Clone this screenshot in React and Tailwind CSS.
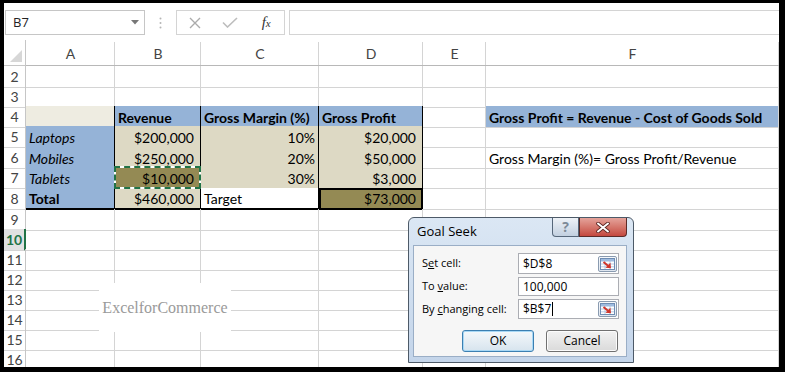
import React from "react";
import { twMerge } from "tailwind-merge";

const GRID = "grid grid-cols-[22px_89px_86px_118px_104px_63px_1fr]";
const COLS = ["A", "B", "C", "D", "E", "F"];

const blueCell = "bg-[#95b3d7] border-r-black border-b-black";
const tanCell = "bg-[#ddd9c4] border-r-black border-b-[#ddd9c4] justify-end";
const tanLast = "bg-[#ddd9c4] border-r-black border-b-black justify-end";
const headCell = "bg-[#95b3d7] border-r-black border-b-black font-bold";
const line3 = { cls: "border-b-black" };

const rows = [
  { n: 2, h: "h-[20px]" },
  { n: 3, h: "h-[20px]", cells: { A: line3, B: line3, C: line3, D: line3 } },
  {
    n: 4,
    h: "h-[20px]",
    cells: {
      A: { cls: "bg-[#eeece1] border-r-black border-b-black" },
      B: { cls: headCell, text: "Revenue" },
      C: { cls: headCell, text: "Gross Margin (%)" },
      D: { cls: headCell, text: "Gross Profit" },
      F: { cls: "bg-[#95b3d7] font-bold", text: "Gross Profit = Revenue - Cost of Goods Sold" },
    },
  },
  {
    n: 5,
    h: "h-[21px]",
    cells: {
      A: { cls: blueCell + " italic", text: "Laptops" },
      B: { cls: tanCell + " pr-[6px]", text: "$200,000" },
      C: { cls: tanCell, text: "10%" },
      D: { cls: tanCell + " pr-[6px]", text: "$20,000" },
    },
  },
  {
    n: 6,
    h: "h-[20px]",
    cells: {
      A: { cls: blueCell + " italic", text: "Mobiles" },
      B: { cls: tanLast + " pr-[6px]", text: "$250,000" },
      C: { cls: tanCell, text: "20%" },
      D: { cls: tanCell + " pr-[6px]", text: "$50,000" },
      F: { text: "Gross Margin (%)= Gross Profit/Revenue" },
    },
  },
  {
    n: 7,
    h: "h-[21px]",
    cells: {
      A: { cls: blueCell + " italic", text: "Tablets" },
      B: { cls: "bg-[#948a54] border-r-black border-b-black justify-end pr-[6px] overflow-visible", text: "$10,000", ants: true },
      C: { cls: tanLast, text: "30%" },
      D: { cls: tanCell + " pr-[6px]", text: "$3,000" },
    },
  },
  {
    n: 8,
    h: "h-[21px]",
    cells: {
      A: { cls: blueCell + " font-bold border-b-2", text: "Total" },
      B: { cls: "bg-[#ddd9c4] border-r-black border-b-2 border-b-black justify-end pr-[6px]", text: "$460,000" },
      C: { cls: "bg-white border-r-black border-b-2 border-b-black", text: "Target" },
      D: { cls: "bg-[#948a54] border-2 border-black justify-end pr-[5px]", text: "$73,000" },
    },
  },
  { n: 9, h: "h-[20px]" },
  { n: 10, h: "h-[20px]", active: true },
  { n: 11, h: "h-[20px]" },
  { n: 12, h: "h-[20px]" },
  { n: 13, h: "h-[20px]" },
  { n: 14, h: "h-[20px]" },
  { n: 15, h: "h-[20px]" },
  { n: 16, h: "h-[20px]" },
];

function Row({ n, h, cells = {}, active }) {
  return (
    <div className={`${GRID} ${h} shrink-0`}>
      <div
        className={twMerge(
          "flex items-center justify-center border-r border-b border-[#d4d4d4] border-r-[#c6c6c6] text-[14px] text-[#444]",
          active && "bg-[#e1e1e1] font-bold text-[#217346] border-r-2 border-r-[#217346]"
        )}
      >
        {n}
      </div>
      {COLS.map((c) => {
        const cell = cells[c] || {};
        return (
          <div
            key={c}
            className={twMerge(
              "relative flex items-end overflow-hidden whitespace-nowrap border-r border-b border-[#d4d4d4] px-[3px] pb-[1px] text-[14px] leading-[17px] text-black",
              cell.cls
            )}
          >
            {cell.text}
            {cell.ants && (
              <>
                <div className="absolute -top-px -left-px -right-px -bottom-px z-10 border-2 border-white" />
                <div className="absolute -top-px -left-px -right-px -bottom-px z-10 border-2 border-dashed border-[#217346]" />
              </>
            )}
          </div>
        );
      })}
    </div>
  );
}

function HeaderRow() {
  return (
    <div className={`${GRID} h-[26px] shrink-0`}>
      <div className="flex items-end justify-end pr-[3px] pb-[3px] border-r border-b border-[#c6c6c6]">
        <svg width="12" height="12" viewBox="0 0 12 12">
          <polygon points="0,12 12,12 12,0" fill="#d7d7d7" />
        </svg>
      </div>
      {COLS.map((c) => (
        <div
          key={c}
          className="flex items-center justify-center pt-[2px] border-b border-b-[#b8b8b8] text-[14px] text-[#444] relative"
        >
          {c}
          <div className="absolute right-0 top-[2px] bottom-0 w-px bg-[#d4d4d4]" />
        </div>
      ))}
    </div>
  );
}

function FormulaBar() {
  return (
    <div className="flex items-center h-[25px] mt-[7px] mb-[5px] shrink-0 font-['Open_Sans',sans-serif]">
      <div className="ml-px w-[140px] h-full border border-[#c6c6c6] flex items-center justify-between pl-[7px] pr-[5px] text-[13px] text-[#222]">
        <span>B7</span>
        <svg width="8" height="5" viewBox="0 0 8 5">
          <polygon points="0,0 8,0 4,4.5" fill="#777" />
        </svg>
      </div>
      <div className="w-[31px] flex justify-center">
        <svg width="3" height="12" viewBox="0 0 3 12">
          <circle cx="1.5" cy="1.5" r="1" fill="#b5b5b5" />
          <circle cx="1.5" cy="6" r="1" fill="#b5b5b5" />
          <circle cx="1.5" cy="10.5" r="1" fill="#b5b5b5" />
        </svg>
      </div>
      <div className="w-[109px] h-full border border-[#d4d4d4] grid grid-cols-3 items-center justify-items-center">
        <svg width="12" height="12" viewBox="0 0 12 12">
          <path d="M1 1 L11 11 M11 1 L1 11" stroke="#ababab" strokeWidth="1.4" fill="none" />
        </svg>
        <svg width="16" height="11" viewBox="0 0 16 11">
          <path d="M1 5.5 L5.5 10 L15 1" stroke="#bdbdbd" strokeWidth="1.6" fill="none" />
        </svg>
        <span className="font-['Liberation_Serif',serif] italic text-[15px] text-[#333] leading-none">
          f<span className="text-[11px]">x</span>
        </span>
      </div>
      <div className="ml-[4px] flex-1 h-full border border-[#d4d4d4] border-r-0" />
    </div>
  );
}

function RefIcon() {
  return (
    <div className="w-[19px] h-[16px] border border-[#8a9bb0] rounded-[2px] bg-linear-to-b from-[#f7f9fc] to-[#dfe6ef] flex items-center justify-center">
      <svg width="15" height="12" viewBox="0 0 15 12">
        <rect x="0.5" y="0.5" width="14" height="11" fill="#fff" stroke="#6f8db3" />
        <rect x="1" y="1" width="13" height="2.5" fill="#9dbbe0" />
        <path d="M1 6 H14 M1 8.8 H14 M5 1 V11 M10 1 V11" stroke="#a9bfdc" strokeWidth="0.8" />
        <path d="M3.5 4 L8 7.8" stroke="#d0352b" strokeWidth="2" />
        <polygon points="5.5,9.8 11,10.2 10.4,4.8" fill="#d0352b" />
      </svg>
    </div>
  );
}

function Field({ label, value, h, icon, caret }) {
  return (
    <div className={`flex items-center ${h}`}>
      <div className="w-[104px] pl-[8px] text-[11px] whitespace-nowrap text-black">{label}</div>
      <div className="w-[101px] h-full border border-[#abadb3] bg-white flex items-center justify-between pl-[4px] pr-[1px] text-[12px] text-black">
        <span className="flex items-center">
          {value}
          {caret && <span className="inline-block w-px h-[14px] bg-black ml-px" />}
        </span>
        {icon && <RefIcon />}
      </div>
    </div>
  );
}

function GoalSeek() {
  return (
    <div className="absolute left-[404px] top-[214px] w-[226px] h-[146px] border border-[#4d5a68] rounded-t-[6px] bg-linear-to-b from-[#dbe7f4] to-[#c4d5ea] font-['Open_Sans',sans-serif] flex flex-col">
      <div className="h-[27px] shrink-0 flex items-center pl-[8px] text-[13px] text-black">Goal Seek</div>
      <div className="absolute left-[143px] top-0 w-[27px] h-[19px] border border-t-0 border-[#56677a] rounded-bl-[4px] bg-linear-to-b from-[#eef2f7] to-[#c2d0e0] flex items-center justify-center text-[14px] font-bold text-[#7d8a98] leading-none">
        ?
      </div>
      <div className="absolute left-[170px] top-0 w-[48px] h-[19px] border border-t-0 border-[#5b2b28] rounded-br-[4px] bg-linear-to-b from-[#e4a39b] to-[#c3473e] flex items-center justify-center">
        <svg width="14" height="11" viewBox="0 0 14 11">
          <path d="M2 1.5 L12 9.5 M12 1.5 L2 9.5" stroke="#5a2420" strokeWidth="3.6" strokeLinecap="round" />
          <path d="M2 1.5 L12 9.5 M12 1.5 L2 9.5" stroke="#fff" strokeWidth="2" strokeLinecap="round" />
        </svg>
      </div>
      <div className="ml-[4px] w-[214px] h-[112px] border border-[#9aaec6] bg-[#f6f6f6] pt-[7px] flex flex-col">
        <div className="flex flex-col gap-[3px]">
          <Field label={<>S<u>e</u>t cell:</>} value="$D$8" h="h-[21px]" icon />
          <Field label={<>To <u>v</u>alue:</>} value="100,000" h="h-[19px]" />
          <Field label={<>By <u>c</u>hanging cell:</>} value="$B$7" h="h-[20px]" icon caret />
        </div>
        <div className="mt-[11px] flex justify-end gap-[12px] pr-[8px]">
          <div className="w-[72px] h-[22px] border border-[#3c7fb1] rounded-[3px] bg-linear-to-b from-[#f4f8fb] to-[#d7e4ee] shadow-[inset_0_0_0_1px_#a8d8f5] flex items-center justify-center text-[12px] text-black">
            OK
          </div>
          <div className="w-[72px] h-[22px] border border-[#707070] rounded-[3px] bg-linear-to-b from-[#f2f2f2] to-[#dadada] shadow-[inset_0_0_0_1px_#fcfcfc] flex items-center justify-center text-[12px] text-black">
            Cancel
          </div>
        </div>
      </div>
    </div>
  );
}

export default function App() {
  return (
    <div className="w-[785px] h-[372px] bg-black pt-[3px] pl-[4px] pr-[6px] pb-[5px] font-['Lato',sans-serif]">
      <div className="relative w-full h-full bg-white overflow-hidden flex flex-col">
        <FormulaBar />
        <HeaderRow />
        {rows.map((r) => (
          <Row key={r.n} {...r} />
        ))}
        <div className="absolute left-[95px] top-[280px] w-[132px] h-[49px] bg-white flex items-center justify-center font-['Liberation_Serif',serif] text-[16px] text-[#9a9a9a]">
          ExcelforCommerce
        </div>
        <GoalSeek />
      </div>
    </div>
  );
}
